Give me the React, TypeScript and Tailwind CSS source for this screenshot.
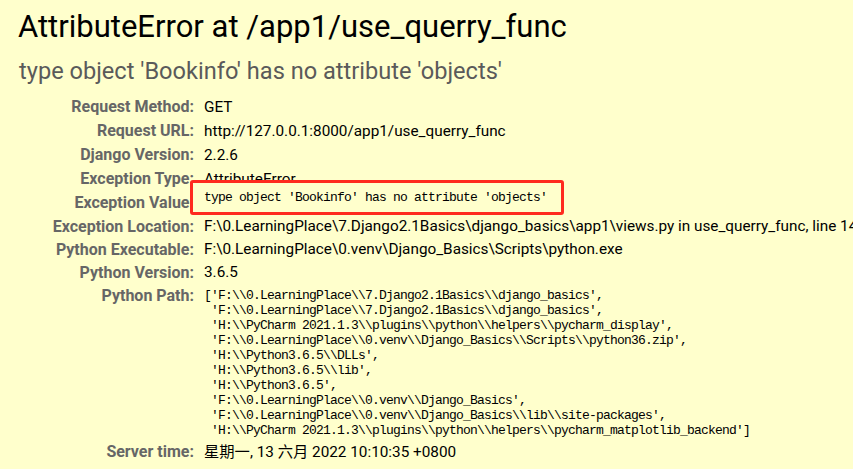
import React from "react";

const sans = { fontFamily: 'Roboto, "Noto Sans CJK SC", sans-serif' };
const mono = { fontFamily: '"Liberation Mono", "Noto Sans CJK SC", monospace' };

const rows: [string, string][] = [
  ["Request Method:", "GET"],
  ["Request URL:", "http://127.0.0.1:8000/app1/use_querry_func"],
  ["Django Version:", "2.2.6"],
  ["Exception Type:", "AttributeError"],
];

const rows2: [string, string][] = [
  ["Exception Location:", "F:\\0.LearningPlace\\7.Django2.1Basics\\django_basics\\app1\\views.py in use_querry_func, line 143"],
  ["Python Executable:", "F:\\0.LearningPlace\\0.venv\\Django_Basics\\Scripts\\python.exe"],
  ["Python Version:", "3.6.5"],
];

const pathLines = [
  "['F:\\\\0.LearningPlace\\\\7.Django2.1Basics\\\\django_basics',",
  " 'F:\\\\0.LearningPlace\\\\7.Django2.1Basics\\\\django_basics',",
  " 'H:\\\\PyCharm 2021.1.3\\\\plugins\\\\python\\\\helpers\\\\pycharm_display',",
  " 'F:\\\\0.LearningPlace\\\\0.venv\\\\Django_Basics\\\\Scripts\\\\python36.zip',",
  " 'H:\\\\Python3.6.5\\\\DLLs',",
  " 'H:\\\\Python3.6.5\\\\lib',",
  " 'H:\\\\Python3.6.5',",
  " 'F:\\\\0.LearningPlace\\\\0.venv\\\\Django_Basics',",
  " 'F:\\\\0.LearningPlace\\\\0.venv\\\\Django_Basics\\\\lib\\\\site-packages',",
  " 'H:\\\\PyCharm 2021.1.3\\\\plugins\\\\python\\\\helpers\\\\pycharm_matplotlib_backend']",
];

const labelCls = "w-[194px] shrink-0 text-right font-bold text-[#666666] text-[16px] whitespace-nowrap";

function Row({ label, value, h = "h-[24px]" }: { label: string; value: React.ReactNode; h?: string }) {
  return (
    <div className={`flex items-center ${h}`}>
      <div className={labelCls}>{label}</div>
      <div className="pl-[10px] whitespace-nowrap text-[15.3px] text-black">{value}</div>
    </div>
  );
}

export default function App() {
  return (
    <div className="w-[853px] h-[469px] overflow-hidden bg-[#ffffcc] relative" style={sans}>
      <h1 className="pl-[18px] pt-[7px] text-[31px] leading-[40px] font-normal text-black whitespace-nowrap">
        AttributeError at /app1/use_querry_func
      </h1>
      <h2 className="pl-[19px] mt-[10px] text-[23.6px] leading-[28px] font-normal text-[#5a5a5a] whitespace-nowrap">
        type object 'Bookinfo' has no attribute 'objects'
      </h2>
      <div className="mt-[10px]">
        {rows.map(([l, v]) => (
          <Row key={l} label={l} value={v} />
        ))}
        <div className="flex items-center h-[24px] relative">
          <div className={labelCls}>Exception Value:</div>
          <div className="absolute left-[190px] top-[-11px] w-[374px] h-[35px] border-[3px] border-[#ff2a1f] rounded-[3px] bg-[#ffffcc] flex items-center pl-[11px]">
            <span className="text-[13px] tracking-[-0.8px] text-black whitespace-pre" style={mono}>
              type object 'Bookinfo' has no attribute 'objects'
            </span>
          </div>
        </div>
        {rows2.map(([l, v]) => (
          <Row key={l} label={l} value={v} h="h-[23px]" />
        ))}
        <div className="flex items-start mt-[4px]">
          <div className={`${labelCls} leading-[15px]`}>Python Path:</div>
          <div className="pl-[10px]">
            {pathLines.map((p, i) => (
              <div key={i} className="text-[13px] leading-[15px] tracking-[-0.8px] text-black whitespace-pre" style={mono}>
                {p}
              </div>
            ))}
          </div>
        </div>
        <Row label="Server time:" value="星期一, 13 六月 2022 10:10:35 +0800" h="h-[28px]" />
      </div>
    </div>
  );
}
